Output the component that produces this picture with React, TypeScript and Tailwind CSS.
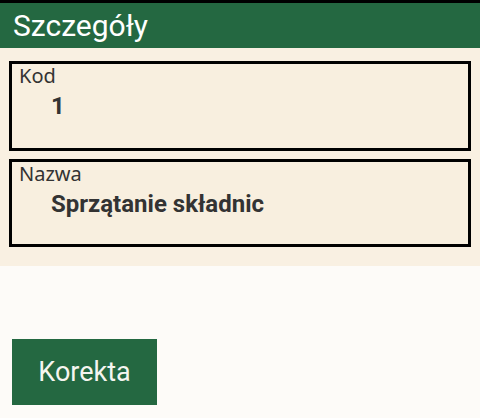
import React from "react";

function Field({ label, value, h }: { label: string; value: string; h: string }) {
  return (
    <div className={`mx-[9px] border-[3px] border-black bg-[#f8efdf] ${h} flex flex-col`}>
      <div
        className="pl-[7px] pt-[0px] text-[20px] leading-[24px] text-[#333]"
        style={{ fontFamily: "'Noto Sans', 'Open Sans', sans-serif" }}
      >
        {label}
      </div>
      <div className="pl-[39px] pt-[4px] text-[24px] leading-[28px] font-bold text-[#333]">{value}</div>
    </div>
  );
}

export default function App() {
  return (
    <div className="w-[480px] h-[418px] flex flex-col bg-[#fdfbf8]" style={{ fontFamily: "Roboto, 'Noto Sans', sans-serif" }}>
      <div className="h-[3px] bg-black" />
      <div className="h-[45px] bg-[#246841] flex items-center pl-[13px] text-white text-[30px] leading-none">
        Szczegóły
      </div>
      <div className="bg-[#f9f0e2] pt-[13px] pb-[19px] flex flex-col gap-[8px]">
        <Field label="Kod" value="1" h="h-[90px]" />
        <Field label="Nazwa" value="Sprzątanie składnic" h="h-[88px]" />
      </div>
      <div className="pt-[73px] pl-[12px]">
        <button className="w-[145px] h-[66px] bg-[#246841] text-[#f5f5f0] text-[27px] flex items-center justify-center">
          Korekta
        </button>
      </div>
    </div>
  );
}
